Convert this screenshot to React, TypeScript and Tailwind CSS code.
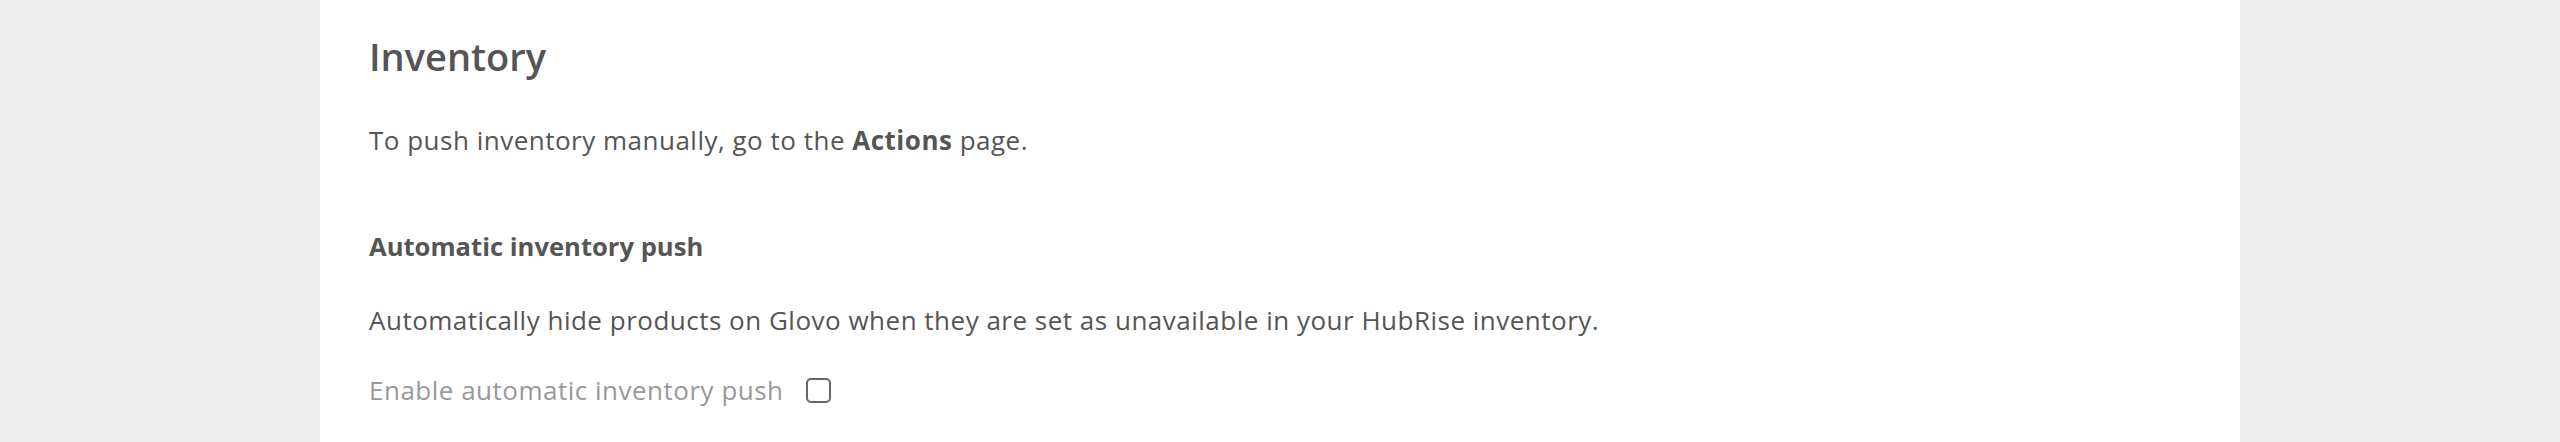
export default function App() {
  return (
    <div className="min-h-[442px] w-full bg-[#ececec] font-['Open_Sans',sans-serif] text-[#555555]">
      <main className="mx-auto min-h-[442px] w-[1920px] bg-white px-[49px] pt-[32px]">
        {/* Inventory section */}
        <h2 className="text-[38px] leading-[48px] font-semibold">Inventory</h2>
        <p className="mt-[41px] text-[26px] leading-[39px] tracking-[0.5px]">
          To push inventory manually, go to the <b className="font-bold">Actions</b> page.
        </p>

        <h3 className="mt-[67px] text-[25.6px] leading-[39px] font-bold">Automatic inventory push</h3>
        <p className="mt-[35px] text-[26px] leading-[39px] tracking-[0.5px]">
          Automatically hide products on Glovo when they are set as unavailable in your HubRise inventory.
        </p>
        <label className="mt-[31px] flex items-center gap-[22px] text-[26px] leading-[39px] tracking-[0.5px] text-[#999999]">
          <span>Enable automatic inventory push</span>
          <span className="h-[25px] w-[25px] rounded-[5px] border-2 border-[#666666] bg-white" />
        </label>
      </main>
    </div>
  );
}
